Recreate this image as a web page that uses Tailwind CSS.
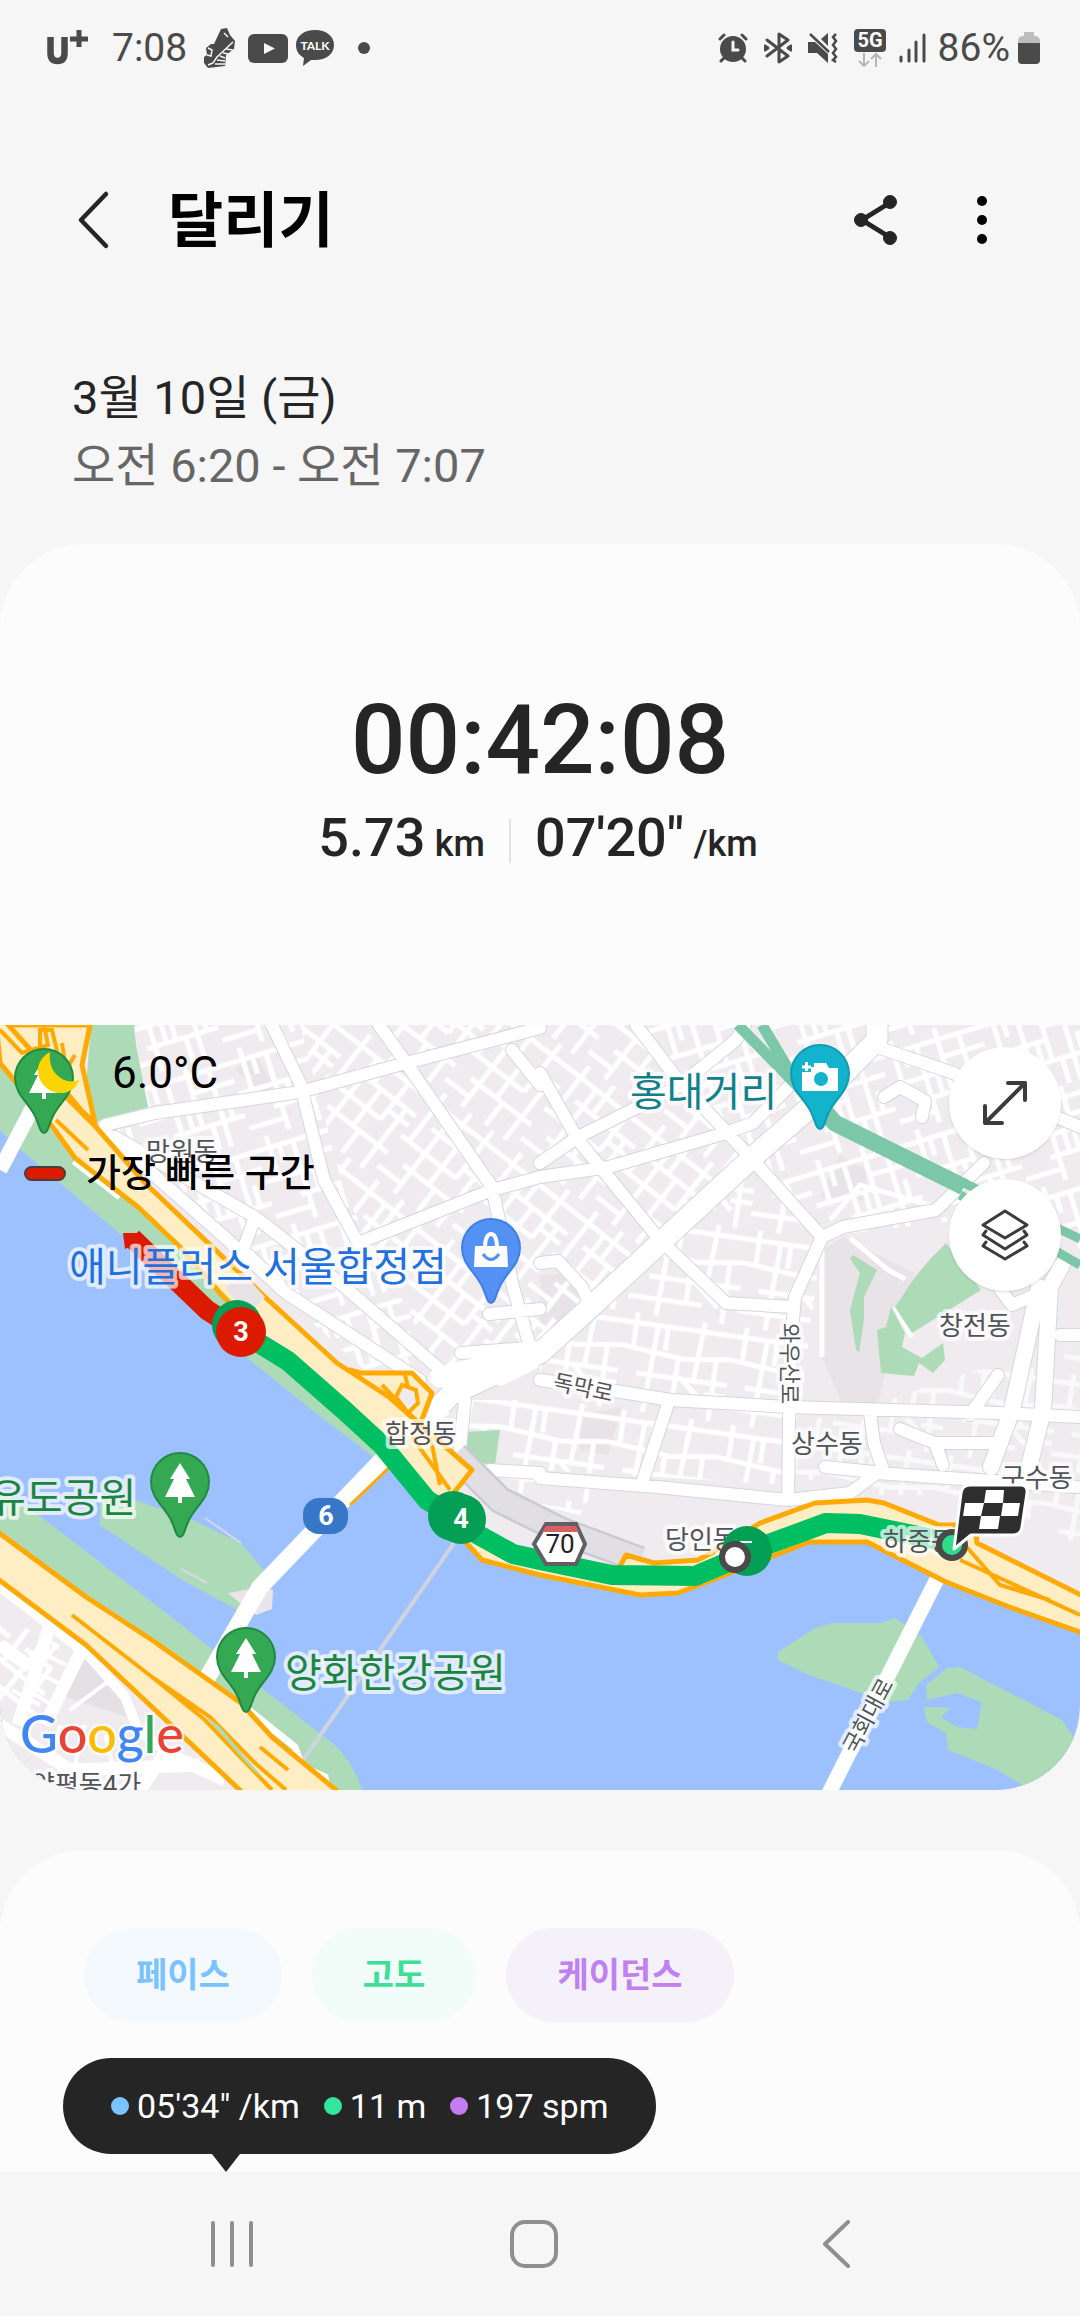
<!DOCTYPE html>
<html lang="ko">
<head>
  <meta charset="UTF-8">
  <meta name="viewport" content="width=device-width, initial-scale=1.0">
  <title>달리기</title>
  <script src="https://cdn.jsdelivr.net/npm/@tailwindcss/browser@4"></script>
</head>
<body class="min-h-screen flex flex-col bg-[#f6f6f6] text-[#252525] font-[Roboto,'Noto_Sans_CJK_KR',sans-serif]">

  <!-- status bar -->
  <div class="flex items-center justify-between h-24 pl-11 pr-10 text-[#4a4a4a] text-[39px] leading-none">
    <div class="flex items-center">
      <svg class="w-[44px] h-[40px] mr-6" viewBox="0 0 44 40" fill="none" stroke="currentColor">
        <path d="M6.500 9V25Q6.500 33 13.500 33T20.500 25V9" stroke-width="6.500"/>
        <path d="M26 11H44M35 2V19" stroke-width="5"/>
      </svg>
      <span class="w-[92px]">7:08</span>
      <svg class="w-8 h-10 mr-3" viewBox="0 0 32 40" fill="currentColor">
        <path d="M17 1L23 0L26 7L31 13L30 21L22 27L21 38L4 40L0 35V29L3 27L2 20L7 16L10 16Z"/>
        <path d="M29 14L13 29L9 35L4 37M22 21L29 22M19 25L25 26M16 28L21 30M13 32L21 33M11 36L21 36M3 27L7 28L8 22L4 20M20 5L24 9" fill="none" stroke="#f6f6f6" stroke-width="1.500"/>
      </svg>
      <svg class="w-10 h-[29px] mr-2" viewBox="0 0 40 29">
        <rect width="40" height="29" rx="6" fill="currentColor"/><path d="M16 9L27 14.500L16 20Z" fill="#f6f6f6"/>
      </svg>
      <svg class="w-[38px] h-9 mr-6" viewBox="0 0 38 36">
        <path d="M19 0C30 0 38 6 38 15S30 30 19 30L15 30L7 36L8 28C3 25 0 21 0 15C0 6 8 0 19 0Z" fill="currentColor"/>
        <text x="19" y="20" text-anchor="middle" font-family="Lato" font-weight="700" font-size="12" fill="#fff">TALK</text>
      </svg>
      <span class="size-3 rounded-full bg-current"></span>
    </div>
    <div class="flex items-center">
      <svg class="w-[30px] h-[30px] mr-4" viewBox="0 0 30 30" fill="none" stroke="currentColor" stroke-width="3" stroke-linecap="round">
        <circle cx="15" cy="16" r="13" fill="currentColor" stroke="none"/>
        <path d="M2 6L6 2M28 6L24 2M3 28L6 25M27 28L24 25"/><path d="M15 9V17H20" stroke="#f6f6f6"/>
      </svg>
      <svg class="w-7 h-8 mr-4" viewBox="0 0 28 32" fill="none" stroke="currentColor" stroke-width="3" stroke-linecap="round" stroke-linejoin="round">
        <path d="M3 8L24 24L15 30V2L24 8L3 24M1 14V18L4 16ZM27 14V18L24 16Z"/>
      </svg>
      <svg class="w-[30px] h-[30px] mr-4" viewBox="0 0 30 30" fill="currentColor">
        <path d="M0 9H7L20 21V30L9 20H0ZM13 6L20 0V13Z"/>
        <path d="M2 1L21 19M28 1L25 4L28 8L25 12L28 16L25 20L28 24L25 27L28 29" fill="none" stroke="currentColor" stroke-width="2.500"/>
      </svg>
      <svg class="w-8 h-[38px] mr-3" viewBox="0 0 32 38">
        <rect width="32" height="23" rx="4" fill="currentColor"/>
        <text x="16" y="18" text-anchor="middle" font-weight="700" font-size="20" fill="#fff">5G</text>
        <path d="M10 24V37M5 32L10 37L15 32M22 38V25M17 30L22 25L27 30" fill="none" stroke="#b5b5b5" stroke-width="2"/>
      </svg>
      <svg class="w-7 h-[30px] mr-3" viewBox="0 0 28 30" stroke="currentColor" stroke-width="3" stroke-linecap="round">
        <path d="M3 24V28M11 17V28M18 9V28M26 2V28"/>
      </svg>
      <span>86%</span>
      <svg class="w-[22px] h-8 ml-2" viewBox="0 0 22 32">
        <path d="M6 0H16V4Q22 4 22 9V11H0V9Q0 4 6 4Z" fill="#bdbdbd"/><path d="M0 11H22V28Q22 32 18 32H4Q0 32 0 28Z" fill="currentColor"/>
      </svg>
    </div>
  </div>

  <!-- header -->
  <header class="flex items-center justify-between h-[248px] pl-18 pr-19">
    <div class="flex items-center gap-14">
      <button aria-label="뒤로" class="pl-1">
        <svg class="w-9 h-15" viewBox="0 0 36 60" fill="none" stroke="#252525" stroke-width="4.500" stroke-linecap="round" stroke-linejoin="round"><path d="M30 4L5 30L30 56"/></svg>
      </button>
      <h1 class="pt-1 text-[60px] font-bold text-black">달리기</h1>
    </div>
    <div class="flex items-center gap-15">
      <button aria-label="공유">
        <svg class="w-12 h-13" viewBox="0 0 48 52" fill="#252525" stroke="#252525"><path d="M39 8L10 26L39 44" fill="none" stroke-width="5"/><circle cx="38" cy="8" r="6.500"/><circle cx="9" cy="26" r="6.500"/><circle cx="38" cy="44" r="6.500"/></svg>
      </button>
      <button aria-label="더보기" class="px-4">
        <svg class="w-3 h-13" viewBox="0 0 12 52"><circle cx="6" cy="7" r="5"/><circle cx="6" cy="26" r="5"/><circle cx="6" cy="45" r="5"/></svg>
      </button>
    </div>
  </header>

  <div class="px-18 pb-11 pt-5 text-[47px] leading-[68px]">
    <p>3월 10일 (금)</p>
    <p class="text-[#666]">오전 6:20 - 오전 7:07</p>
  </div>

  <!-- workout card -->
  <section class="rounded-[84px] bg-[#fcfcfc] overflow-hidden">
    <div class="pt-35 pb-[147px] text-center font-medium">
      <p class="text-[96px] leading-[112px]">00:42:08</p>
      <div class="flex items-center justify-center gap-6 pt-2 pr-1 text-[54px] leading-[68px]">
        <p>5.73 <span class="text-[36px] -ml-1">km</span></p>
        <span class="w-[2px] h-11 bg-[#e3e3e3]"></span>
        <p>07'20" <span class="text-[36px] -ml-1">/km</span></p>
      </div>
    </div>

    <!-- route map -->
    <div class="relative rounded-b-[84px] overflow-hidden">
      <svg class="block w-full" viewBox="0 0 1080 765" fill="none" font-size="26">
        <defs>
          <g stroke="#fff" stroke-width="5">
            <pattern id="blocksA" width="104" height="92" patternUnits="userSpaceOnUse" patternTransform="rotate(-17)">
              <path d="M0 12H104M0 44H60M30 66H104M14 0V44M38 12V92M60 0V66M82 12V92M60 30H104M38 80H0M50 44V66M92 44V66M24 12V30M70 66V92"/>
            </pattern>
            <pattern id="blocksB" width="96" height="110" patternUnits="userSpaceOnUse" patternTransform="rotate(38)">
              <path d="M0 14H96M20 36H96M0 60H70M20 82H96M10 0V60M30 14V110M52 36V82M70 0V60M84 36V110M42 0V36M60 82V110M0 98H30M70 48H96"/>
            </pattern>
            <pattern id="blocksC" width="110" height="98" patternUnits="userSpaceOnUse" patternTransform="rotate(8)">
              <path d="M0 10H110M0 34L64 40L110 34M18 60H110M0 82H74M12 0V34M34 10L30 98M58 40V82M80 0L76 60M96 34V98M44 10V34M88 72H110M64 60L90 82"/>
            </pattern>
          </g>
          <path id="pin" d="M0 55C-4 55 -5 46 -9 38C-16 24 -29 16 -29 0A29 29 0 1 1 29 0C29 16 16 24 9 38C5 46 4 55 0 55Z"/>
          <path id="tree" d="M0 -19L10 -3H6L15 15H2V21H-2V15H-15L-6 -3H-10Z" fill="#fff"/>
        </defs>

        <rect width="1080" height="765" fill="#efebef"/>
        <g fill="#e7e3e7">
          <path d="M822 225L843 212L915 248L895 300L877 385H845L822 332Z"/>
          <path d="M820 172L840 130L866 145V176ZM235 45L255 28L275 62L262 68ZM580 390L622 382L608 430L580 425ZM540 250L565 248L588 275L550 312H540Z"/>
        </g>
        <!-- side streets -->
        <g>
          <path d="M130 0H300L345 170L440 345L370 350L105 110L150 90Z" fill="url(#blocksA)"/>
          <path d="M300 0H636L740 132L540 330L440 345L345 170Z" fill="url(#blocksB)"/>
          <path d="M636 0H1080V225L1000 190L822 212L750 132Z" fill="url(#blocksA)"/>
          <path d="M740 142L822 212L790 460L540 445L540 340L590 300Z" fill="url(#blocksC)"/>
          <path d="M790 400L876 380L960 350L1080 320V520L980 470H870L790 450Z" fill="url(#blocksC)" opacity=".7"/>
          <path d="M460 375H540V450L600 455L580 490L540 480L460 430Z" fill="url(#blocksC)"/>
        </g>
        <path d="M822 225V332M850 213L888 245L905 254M895 282L912 312M830 195L860 160L930 180" stroke="#fff" stroke-width="5"/>

        <!-- parks -->
        <g fill="#addbb7">
          <path d="M91 0H134L136 20L148 82L95 97L86 60Z"/>
          <path d="M946 218L981 265L912 308L895 282L915 252L932 232ZM891 282L905 308L902 322L922 333L943 318L945 335L933 348L919 338L914 351L881 348L877 305L886 302ZM853 230L877 245L864 272V295L859 327L856 325L850 285L860 248L850 233Z"/>
          <path d="M463 407L500 405L495 440L462 436Z"/>
        </g>

        <!-- main streets, casing first -->
        <g stroke-linejoin="round" stroke-linecap="round">
          <g stroke="#d3d7de">
            <path stroke-width="14" d="M105 100L155 88L300 67L406 38L540 3M272 0L300 58L324 155L358 218M115 112L255 192L340 258L444 348M103 105L220 208L286 268L420 355M379 0L406 38L492 162L513 262L530 322M358 218L492 165L540 152L609 142L726 108L753 98L800 50M255 192L243 225L280 260M512 25L540 60M636 0L678 55L750 132L822 212M540 48L578 115L660 215L726 278L791 282M822 212L795 272L790 328L788 475M822 212L843 202L936 185L984 138M540 138L578 112L678 62L736 15L745 0M877 22L953 48L1080 102M540 355L609 365L671 375L788 382L998 388L1080 392M540 453L657 462L788 475L850 468L877 448L1077 462M870 388L874 418L884 448M667 382L643 455M461 328L540 322M489 289L540 284M465 375L458 442M489 445L540 448M970 390L998 350M900 404L935 418L943 440M935 418L998 418M825 442L884 448M884 72L900 62L925 76L922 92M1000 264L1012 280L1035 270M540 238L558 236L582 262L590 280M1060 310H1080"/>
            <path stroke-width="23" d="M400 425L450 370L540 328L595 278L753 132L815 78L877 15V0"/>
            <path stroke-width="18" d="M1039 262L1012 385L991 442M1062 240L1050 262L1043 385L1029 442"/>
          </g>
          <g stroke="#fff">
            <path stroke-width="12" d="M105 100L155 88L300 67L406 38L540 3M272 0L300 58L324 155L358 218M115 112L255 192L340 258L444 348M103 105L220 208L286 268L420 355M379 0L406 38L492 162L513 262L530 322M358 218L492 165L540 152L609 142L726 108L753 98L800 50M255 192L243 225L280 260M512 25L540 60M636 0L678 55L750 132L822 212M540 48L578 115L660 215L726 278L791 282M822 212L795 272L790 328L788 475M822 212L843 202L936 185L984 138M540 138L578 112L678 62L736 15L745 0M877 22L953 48L1080 102M540 355L609 365L671 375L788 382L998 388L1080 392M540 453L657 462L788 475L850 468L877 448L1077 462M870 388L874 418L884 448M667 382L643 455M461 328L540 322M489 289L540 284M465 375L458 442M489 445L540 448M970 390L998 350M900 404L935 418L943 440M935 418L998 418M825 442L884 448M884 72L900 62L925 76L922 92M1000 264L1012 280L1035 270M540 238L558 236L582 262L590 280M1060 310H1080"/>
            <path stroke-width="21" d="M400 425L450 370L540 328L595 278L753 132L815 78L877 15V0M530 335L500 350M440 352L530 330"/>
            <path stroke-width="16" d="M1039 262L1012 385L991 442M1062 240L1050 262L1043 385L1029 442"/>
          </g>
        </g>
        <!-- railway -->
        <g stroke="#7cc7a7">
          <path stroke-width="11" d="M738 0L812 76M762 0L795 55"/>
          <path stroke-width="17" d="M800 60L835 98L964 162"/>
          <path stroke-width="9" d="M964 158L1080 214M960 170L1080 240"/>
        </g>

        <!-- river -->
        <path d="M0 36L60 90L300 340L385 420L430 480L482 535L540 550L640 570L678 568L712 555L809 518L867 517L946 557L1012 583L1080 607V765H0Z" fill="#9dc1ff"/>
        <g fill="#addbb7">
          <path d="M0 36L60 90L300 340L385 420L375 433L312 385L241 328L213 295L124 212L21 125L0 105Z"/>
          <path d="M0 468L41 492L179 598L213 625L337 722Q355 742 362 765H0Z"/>
          <path d="M100 472L138 476L190 494L241 518L265 547L248 578L238 585L182 555L100 500Z"/>
          <path d="M833 598H881L895 593L922 612L939 642L919 658L908 675L888 677L809 650L778 635V627L815 603Z"/>
          <path d="M948 643L960 642L1062 695L1080 722V765H1030L998 745L948 725L946 708L927 697L924 682L950 683L941 692L957 702L977 704L982 677L957 668L927 675L926 660Z"/>
        </g>
        <path d="M228 568L262 562L273 565L272 584L256 590L246 583Z" fill="#e9e5e9"/>
        <path d="M181 544L207 558M205 493L215 500L241 518" stroke="#d8d8e2" stroke-width="2"/>
        <path d="M0 545L86 618L245 765H0Z" fill="#efebef"/>
        <path d="M0 590L60 620L35 700L0 690Z" fill="url(#blocksB)"/>
        <path d="M83 625L110 655L135 695L60 670Z" fill="#e4e0e4"/>
        <g stroke="#fff">
          <path d="M0 562L50 600L90 632L125 672L138 705L165 725" stroke-width="10"/>
          <path d="M50 600L18 700M80 628L45 700M0 620L30 642M0 700L70 745L200 740M140 765L165 728L225 755" stroke-width="13"/>
          <path d="M36 625L66 640M32 645L62 660M28 665L55 682M12 665L40 680M70 685L110 655M60 700L50 740M85 700L75 740M105 710L115 750" stroke-width="4"/>
        </g>
        <path d="M454 518L382 622L303 735" stroke="#cfd3de" stroke-width="4"/>
        <g stroke="#fff">
          <path d="M444 382L379 438L260 562L203 660" stroke-width="17"/>
          <path d="M939 550L828 770M76 0L0 145" stroke-width="15"/>
          <path d="M245 682L295 722L302 742L325 752L327 765M200 670L180 662L215 712M74 136L120 172" stroke-width="7"/>
        </g>

        <!-- riverside expressways -->
        <path d="M350 480L392 440" stroke="#ffaa04" stroke-width="3"/>
        <path d="M455 430L500 475L560 505L640 535" stroke="#c9cbd2" stroke-width="28"/>
        <path d="M455 430L500 475L560 505L640 535" stroke="#e2dfe4" stroke-width="23"/>
        <g fill="#ffedc3" stroke="#ffaa04" stroke-width="5" stroke-linejoin="round">
          <path d="M0 0H90L82 40L95 98L82 86L28 22L0 0Z"/>
          <path d="M350 345L360 348H412L432 368L420 400L390 385Z"/>
          <path d="M-5 -15L28 22L69 75L96 102L145 158L265 272L337 338L389 372L472 445L452 470L482 515L540 530L612 556L626 530L654 538L698 535L722 522L760 498L815 478L867 475L884 478L939 500L975 500L977 518L1085 572V609L1012 583L946 557L867 517H809L712 555L678 568L640 570L540 550L482 535L427 475L350 392L300 345L262 312L220 268L180 222L138 182L75 133L55 105L0 38Z"/>
          <path d="M-5 505L86 572L152 615L241 678L272 712L342 770H245L152 682L86 620L-5 552Z"/>
        </g>
        <g stroke="#ffaa04" stroke-width="4">
          <path d="M0 5L22 28L48 20L44 0M40 30V5H52L58 30M62 18L66 45L75 30M56 95L88 125M295 345L335 380M382 360L430 410L440 460M405 350L412 378M412 412L450 465M960 535L1015 560L1080 590M965 520L1000 560L1050 575M72 590L152 652L210 692L255 738L286 765M152 652L205 695L272 765M260 722L288 745"/>
        </g>
        <path d="M396 372L402 360L416 365L418 378L408 388Z" fill="#efebef" stroke="#ffaa04" stroke-width="4"/>
        <path d="M204 690L220 702L265 755L250 742Z" fill="#addbb7"/>
        <path d="M225 262L245 250L265 272L248 290Z" fill="#e6e2e6"/>

        <!-- route -->
        <g stroke-width="20" stroke-linejoin="round">
          <path d="M241 307L288 336L345 386L382 420L427 475L455 492L475 508L513 529L540 535L612 550L695 551L733 535L747 527L826 498L860 499L952 518" stroke="#00bf63"/>
          <path d="M132 213L207 285L241 307" stroke="#dc1a00"/>
          <path d="M123 208H139L146 214L125 224Z" fill="#dc1a00"/>
        </g>

        <!-- place names -->
        <g fill="#505458" stroke="#fff" stroke-opacity=".7" stroke-width="8" stroke-linejoin="round" paint-order="stroke">
          <text x="146" y="136">망원동</text>
          <text x="385" y="418">합정동</text>
          <text x="939" y="310">창전동</text>
          <text x="791" y="428">상수동</text>
          <text x="1001" y="462">구수동</text>
          <text x="665" y="524">당인동</text>
          <text x="883" y="526">하중동</text>
          <text x="31" y="769">양평동4가</text>
          <text font-size="22" transform="translate(552 364) rotate(12)">독막로</text>
          <text font-size="22" transform="translate(782 298) rotate(90)">와우산로</text>
          <text font-size="22" transform="translate(856 730) rotate(-62)">국회대로</text>
          <g font-size="40">
            <text x="69" y="256" fill="#1f70e0">애니플러스 서울합정점</text>
            <text x="630" y="81" fill="#12808a">홍대거리</text>
            <text x="-11" y="487" fill="#1d843f">유도공원</text>
            <text x="285" y="662" fill="#1d843f">양화한강공원</text>
          </g>
        </g>

        <!-- pins -->
        <g stroke-width="2">
          <g transform="translate(44 53)"><use href="#pin" fill="#34a853" stroke="#208a40"/><use href="#tree"/></g>
          <g transform="translate(180 457)"><use href="#pin" fill="#34a853" stroke="#208a40"/><use href="#tree"/></g>
          <g transform="translate(246 632)"><use href="#pin" fill="#34a853" stroke="#208a40"/><use href="#tree"/></g>
          <g transform="translate(491 223)">
            <use href="#pin" fill="#5491f5" stroke="#3f7fe6"/>
            <path d="M-16 -2H16L17 19H-17Z" fill="#fff"/><path d="M-6 -2C-6 -18 6 -18 6 -2" stroke="#fff" stroke-width="4"/><path d="M-8 6Q0 17 8 6" stroke="#5491f5" stroke-width="3"/>
          </g>
          <g transform="translate(820 49)">
            <use href="#pin" fill="#14b3cd" stroke="#0f9bb2"/>
            <path d="M-18 -2H-9V-7H-6V-11H6L9 -6H18V17H-18Z" fill="#fff"/><path d="M-18 -7H-9M-13.500 -12V-3" stroke="#fff" stroke-width="3"/><circle cx="1" cy="5" r="7" fill="#14b3cd"/>
          </g>
        </g>

        <!-- road shields -->
        <rect x="303" y="473" width="45" height="36" rx="16" fill="#3877c8"/>
        <path d="M546 499H576L585 519L576 539H546L534 519Z" fill="#fff" stroke="#5f6063" stroke-width="4"/>
        <path d="M546 501H576L579 507H542Z" fill="#d86060"/>
        <text x="560" y="528" font-size="26" text-anchor="middle" fill="#222">70</text>

        <!-- kilometre marks -->
        <g fill="#049e54">
          <circle cx="237" cy="300" r="25"/><circle cx="453" cy="491" r="25"/><circle cx="461" cy="494" r="25"/><circle cx="747" cy="526" r="25"/>
        </g>
        <circle cx="241" cy="307" r="25" fill="#dc1a00"/>
        <g fill="#fff" font-size="27" font-weight="700" text-anchor="middle">
          <text x="241" y="316">3</text><text x="461" y="503">4</text><text x="326" y="500">6</text>
        </g>
        <path d="M740 517H752" stroke="#fff" stroke-width="2"/>
        <circle cx="735" cy="532" r="13" fill="#fff" stroke="#4a4a4a" stroke-width="6"/>
        <circle cx="952" cy="520" r="13" fill="#2fdc8c" stroke="#4a4a4a" stroke-width="6"/>
        <path d="M970 460H1020Q1028 460 1027 468L1022 502Q1021 510 1013 510H971L954 524L961 468Q962 460 970 460Z" fill="#2e2e2e" stroke="#fff" stroke-width="3" stroke-linejoin="round"/>
        <path d="M986 465H1004L1003 478H1020L1018 491H1000L998 504H979L981 491H963L965 478H984Z" fill="#fff"/>
        <path d="M984 478H1003L1001 491H981Z" fill="#2e2e2e"/>

        <text x="20" y="728" font-family="Lato" font-size="52" font-weight="500" stroke-width="5" stroke="#fff" stroke-opacity=".7" paint-order="stroke"><tspan fill="#4285f4">G</tspan><tspan fill="#ea4335">o</tspan><tspan fill="#fbbc04">o</tspan><tspan fill="#4285f4">g</tspan><tspan fill="#34a853">l</tspan><tspan fill="#ea4335">e</tspan></text>
      </svg>

      <!-- weather and legend -->
      <div class="absolute left-6 top-5 text-black">
        <div class="flex items-center h-14 pl-3">
          <svg class="w-11 h-11" viewBox="0 0 44 44"><path d="M14 1C5 6 1 14 2 22C4 34 14 43 27 42C35 41 41 36 43 29C34 32 27 30 21 24C15 18 13 10 14 1Z" fill="#fad502"/></svg>
          <span class="ml-8 text-[44px]">6.0°C</span>
        </div>
        <div class="flex items-center h-12 mt-12">
          <span class="w-[42px] h-[15px] rounded-full bg-[#dc1a00] border-2 border-[#44403c]"></span>
          <span class="ml-5 text-[38px] font-medium">가장 빠른 구간</span>
        </div>
      </div>
      <div class="absolute right-[19px] top-[22px] flex flex-col gap-5">
        <button aria-label="지도 확대" class="grid place-items-center size-28 rounded-full bg-white shadow-sm">
          <svg class="size-11" viewBox="0 0 44 44" fill="none" stroke="#3c3c3c" stroke-width="4" stroke-linecap="round" stroke-linejoin="round"><path d="M2 42L42 2M25 2H42V19M2 25V42H19"/></svg>
        </button>
        <button aria-label="지도 유형" class="grid place-items-center size-28 rounded-full bg-white shadow-sm">
          <svg class="w-12 h-13" viewBox="0 0 48 52" fill="none" stroke="#3c3c3c" stroke-width="3" stroke-linecap="round" stroke-linejoin="round"><path d="M24 2L46 16L24 29L2 16ZM5 22L2 26L24 40L46 26L43 22M5 33L2 37L24 50L46 37L43 33"/></svg>
        </button>
      </div>
    </div>
  </section>

  <!-- chart card -->
  <section class="relative grow mt-15 pt-[78px] rounded-t-[84px] bg-[#fcfcfc]">
    <div class="flex gap-[30px] px-21 text-[34px] font-bold">
      <button class="h-[94px] px-[52px] rounded-full bg-[#f4f9fd] text-[#7bc3ff]">페이스</button>
      <button class="h-[94px] px-[51px] rounded-full bg-[#f2fcf8] text-[#3edf99]">고도</button>
      <button class="h-[94px] px-[51px] rounded-full bg-[#f5f1fb] text-[#c080ef]">케이던스</button>
    </div>
    <div class="mt-9 ml-[63px] w-fit">
      <div class="flex items-center gap-6 h-24 px-12 rounded-full bg-[#252525] text-white text-[34px]">
        <span class="flex items-center gap-2"><i class="size-[18px] rounded-full bg-[#7bc3ff]"></i>05'34" /km</span>
        <span class="flex items-center gap-2"><i class="size-[18px] rounded-full bg-[#32e69b]"></i>11 m</span>
        <span class="flex items-center gap-2"><i class="size-[18px] rounded-full bg-[#c47cf2]"></i>197 spm</span>
      </div>
      <svg class="block w-7 h-[18px] ml-[149px]" viewBox="0 0 28 18"><path d="M0 0H28L14 18Z" fill="#252525"/></svg>
    </div>
  </section>

  <!-- system navigation -->
  <nav class="grid grid-cols-3 items-center h-36 pl-[81px] pr-[93px] text-[#8f8f8f]">
    <button aria-label="최근 앱" class="justify-self-center"><svg class="w-11 h-12" viewBox="0 0 44 48" stroke="currentColor" stroke-width="4" stroke-linecap="round"><path d="M3 3V45M22 3V45M41 3V45"/></svg></button>
    <button aria-label="홈" class="justify-self-center"><svg class="size-12" viewBox="0 0 48 48" fill="none" stroke="currentColor" stroke-width="4"><rect x="2" y="2" width="44" height="44" rx="13"/></svg></button>
    <button aria-label="이전" class="justify-self-center"><svg class="w-7 h-12" viewBox="0 0 28 48" fill="none" stroke="currentColor" stroke-width="4" stroke-linecap="round" stroke-linejoin="round"><path d="M26 2L3 24L26 46"/></svg></button>
  </nav>
</body>
</html>
